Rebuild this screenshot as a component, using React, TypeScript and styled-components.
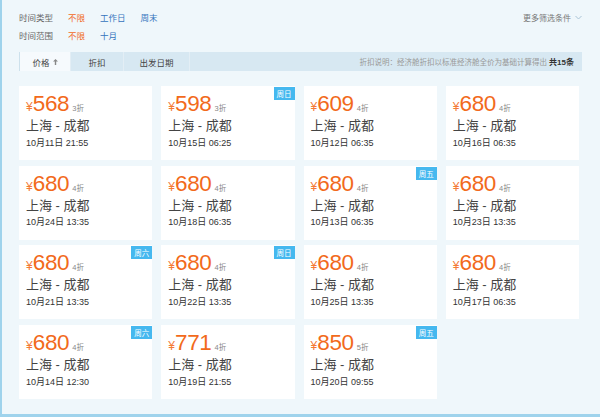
import React from "react";
import styled, { createGlobalStyle } from "styled-components";

const Global = createGlobalStyle`
  html, body { margin: 0; padding: 0; background: #eff7fb; }
  * { box-sizing: border-box; }
`;

const Page = styled.div`
  width: 600px;
  height: 417px;
  background: #eff7fb;
  border-left: 2px solid #9fd3ec;
  border-bottom: 3px solid #9fd3ec;
  padding: 8px 18px 0 17px;
  font-family: "Liberation Sans", "Noto Sans CJK SC", sans-serif;
  color: #333;
  overflow: hidden;
`;

const FilterRow = styled.div`
  display: flex;
  align-items: center;
  height: 18px;
  font-size: 8.5px;
`;

const FilterLabel = styled.span`
  width: 49px;
  color: #666;
`;

const FilterOption = styled.span<{ $active?: boolean }>`
  color: ${(p) => (p.$active ? "#f26a1b" : "#3574bd")};
  padding-right: 15px;
`;

const More = styled.span`
  margin-left: auto;
  color: #777;
  font-size: 8px;
  display: flex;
  align-items: center;
  gap: 4px;
`;

const TabBar = styled.div`
  margin-top: 8px;
  height: 19px;
  background: #d7e8f2;
  display: flex;
  align-items: stretch;
  font-size: 8.5px;
`;

const Tab = styled.div<{ $w: number; $active?: boolean }>`
  width: ${(p) => p.$w}px;
  display: flex;
  align-items: center;
  justify-content: center;
  gap: 3px;
  color: #444;
  background: ${(p) => (p.$active ? "#f6fafd" : "transparent")};
  border-left: ${(p) => (p.$active ? "1px solid #cde1ec" : "none")};
  border-right: 1px solid #e3eef5;
`;

const TabNote = styled.div`
  margin-left: auto;
  padding-right: 8px;
  display: flex;
  align-items: center;
  color: #999;
  font-size: 7.5px;
  b {
    color: #333;
    font-weight: bold;
    font-size: 8px;
    margin-left: 2px;
  }
`;

const Grid = styled.div`
  margin-top: 15px;
  width: 560px;
  display: grid;
  grid-template-columns: repeat(4, 1fr);
  column-gap: 9px;
  row-gap: 5.7px;
`;

const Card = styled.div`
  position: relative;
  height: 74px;
  background: #fff;
  padding: 5px 7px 0 7px;
`;

const PriceLine = styled.div`
  display: flex;
  align-items: baseline;
  color: #f26a1b;
  line-height: 26px;
  height: 26px;
`;

const Yen = styled.span`
  font-size: 12px;
  color: #f47a35;
`;

const Amount = styled.span`
  font-size: 22.5px;
  letter-spacing: -0.3px;
`;

const Discount = styled.span`
  font-size: 7.5px;
  color: #888;
  margin-left: 3px;
`;

const Route = styled.div`
  font-size: 13px;
  color: #444;
  line-height: 16px;
  margin-top: 1px;
`;

const DateText = styled.div`
  font-size: 9px;
  color: #333;
  line-height: 12px;
  margin-top: 2.5px;
`;

const Tag = styled.span`
  position: absolute;
  top: 1px;
  right: 0;
  width: 21px;
  height: 13px;
  background: #45b8ef;
  color: #fff;
  font-size: 7.5px;
  display: flex;
  align-items: center;
  justify-content: center;
`;

type Flight = { price: number; off: string; date: string; tag?: string };

const flights: Flight[] = [
  { price: 568, off: "3折", date: "10月11日 21:55" },
  { price: 598, off: "3折", date: "10月15日 06:25", tag: "周日" },
  { price: 609, off: "4折", date: "10月12日 06:35" },
  { price: 680, off: "4折", date: "10月16日 06:35" },
  { price: 680, off: "4折", date: "10月24日 13:35" },
  { price: 680, off: "4折", date: "10月18日 06:35" },
  { price: 680, off: "4折", date: "10月13日 06:35", tag: "周五" },
  { price: 680, off: "4折", date: "10月23日 13:35" },
  { price: 680, off: "4折", date: "10月21日 13:35", tag: "周六" },
  { price: 680, off: "4折", date: "10月22日 13:35", tag: "周日" },
  { price: 680, off: "4折", date: "10月25日 13:35" },
  { price: 680, off: "4折", date: "10月17日 06:35" },
  { price: 680, off: "4折", date: "10月14日 12:30", tag: "周六" },
  { price: 771, off: "4折", date: "10月19日 21:55" },
  { price: 850, off: "5折", date: "10月20日 09:55", tag: "周五" },
];

export default function App() {
  return (
    <>
      <Global />
      <Page>
        <FilterRow>
          <FilterLabel>时间类型</FilterLabel>
          <FilterOption $active>不限</FilterOption>
          <FilterOption>工作日</FilterOption>
          <FilterOption>周末</FilterOption>
          <More>
            更多筛选条件
            <svg width="7" height="5" viewBox="0 0 7 5">
              <path d="M0.5 1 L3.5 4 L6.5 1" fill="none" stroke="#aac4d6" strokeWidth="1" />
            </svg>
          </More>
        </FilterRow>
        <FilterRow>
          <FilterLabel>时间范围</FilterLabel>
          <FilterOption $active>不限</FilterOption>
          <FilterOption>十月</FilterOption>
        </FilterRow>
        <TabBar>
          <Tab $w={52} $active>
            价格
            <svg width="5" height="6" viewBox="0 0 5 6">
              <path d="M2.5 0 L5 2.5 L3.2 2.5 L3.2 6 L1.8 6 L1.8 2.5 L0 2.5 Z" fill="#888" />
            </svg>
          </Tab>
          <Tab $w={53}>折扣</Tab>
          <Tab $w={66}>出发日期</Tab>
          <TabNote>
            折扣说明：经济舱折扣以标准经济舱全价为基础计算得出<b>共15条</b>
          </TabNote>
        </TabBar>
        <Grid>
          {flights.map((f, i) => (
            <Card key={i}>
              {f.tag && <Tag>{f.tag}</Tag>}
              <PriceLine>
                <Yen>¥</Yen>
                <Amount>{f.price}</Amount>
                <Discount>{f.off}</Discount>
              </PriceLine>
              <Route>上海 - 成都</Route>
              <DateText>{f.date}</DateText>
            </Card>
          ))}
        </Grid>
      </Page>
    </>
  );
}
